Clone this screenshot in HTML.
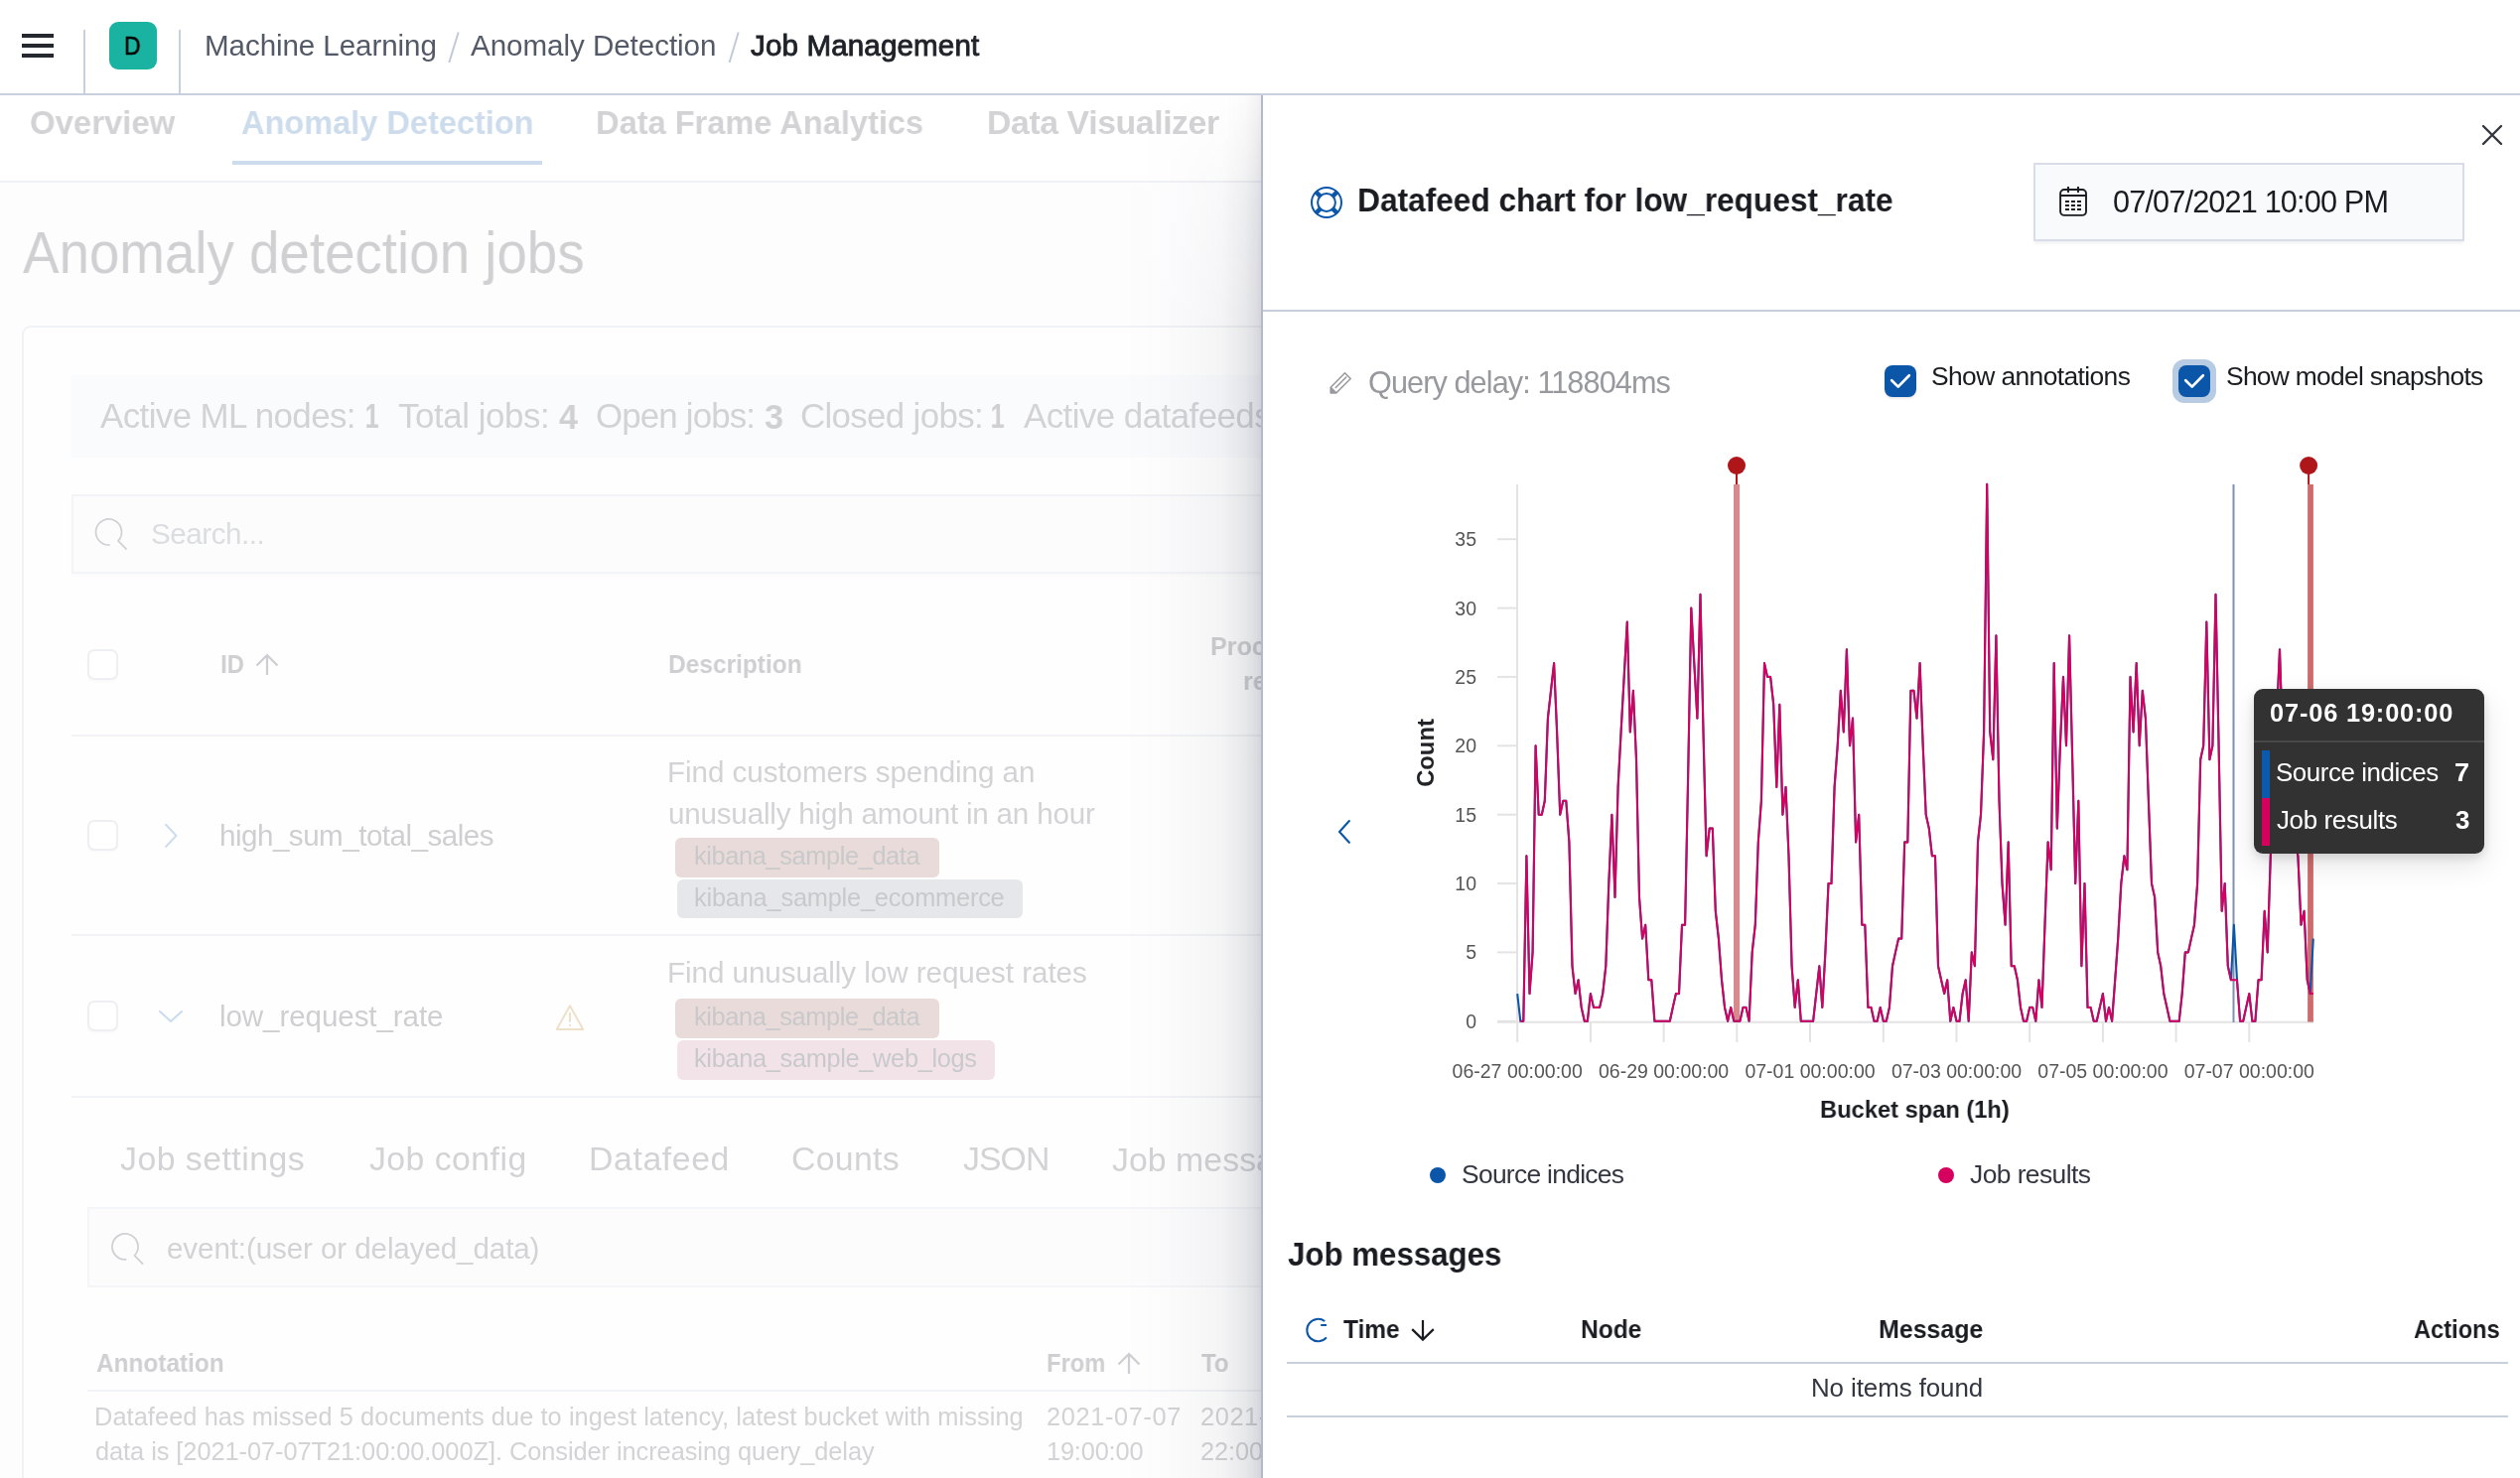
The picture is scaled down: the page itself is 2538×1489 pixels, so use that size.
<!DOCTYPE html>
<html><head><meta charset="utf-8"><title>Job Management</title>
<style>
html,body{margin:0;padding:0}
body{width:2538px;height:1489px;overflow:hidden;position:relative;background:#fff;font-family:"Liberation Sans",sans-serif}
.a{position:absolute;box-sizing:border-box}
.t{position:absolute;white-space:nowrap;z-index:2;will-change:transform}
.tf{z-index:8}
svg.full{position:absolute;left:0;top:0;width:2538px;height:1489px}
</style></head><body>
<!-- ===== left page (faded behind flyout) ===== -->
<div class="a" style="left:0;top:96px;width:1270px;height:1393px;background:#fdfdfe;z-index:0"></div>
<div class="a" style="left:0;top:96px;width:1270px;height:86px;background:#fff;z-index:0"></div>
<div class="a" style="left:0;top:182px;width:1270px;height:2px;background:#f0f1f5;z-index:0"></div>
<div class="a" style="left:234px;top:162px;width:312px;height:4px;background:#cddcec;z-index:1"></div>
<!-- panel -->
<div class="a" style="left:22px;top:328px;width:1400px;height:1300px;background:#fefefe;border:2px solid #f0f2f6;border-radius:9px;z-index:0"></div>
<!-- stats bar -->
<div class="a" style="left:72px;top:378px;width:1300px;height:83px;background:#fafbfd;z-index:1"></div>
<!-- search -->
<div class="a" style="left:72px;top:498px;width:1300px;height:80px;background:#fcfcfd;border:2px solid #f3f4f7;box-shadow:0 2px 3px rgba(0,0,0,0.015);z-index:1"></div>
<!-- table header checkbox -->
<div class="a" style="left:88px;top:654px;width:31px;height:31px;background:#fff;border:2px solid #eeeff2;border-radius:7px;box-shadow:0 2px 2px rgba(0,0,0,0.02);z-index:1"></div>
<div class="a" style="left:72px;top:740px;width:1300px;height:2px;background:#f2f3f6;z-index:1"></div>
<!-- row1 -->
<div class="a" style="left:88px;top:826px;width:31px;height:31px;background:#fff;border:2px solid #eeeff2;border-radius:7px;box-shadow:0 2px 2px rgba(0,0,0,0.02);z-index:1"></div>
<div class="a" style="left:680px;top:844px;width:266px;height:40px;background:#e8dbd9;border-radius:6px;z-index:1"></div>
<div class="a" style="left:682px;top:886px;width:348px;height:39px;background:#e6e7eb;border-radius:6px;z-index:1"></div>
<div class="a" style="left:72px;top:941px;width:1300px;height:2px;background:#f2f3f6;z-index:1"></div>
<!-- row2 -->
<div class="a" style="left:88px;top:1008px;width:31px;height:31px;background:#fff;border:2px solid #eeeff2;border-radius:7px;box-shadow:0 2px 2px rgba(0,0,0,0.02);z-index:1"></div>
<div class="a" style="left:680px;top:1006px;width:266px;height:40px;background:#e8dbd9;border-radius:6px;z-index:1"></div>
<div class="a" style="left:682px;top:1048px;width:320px;height:40px;background:#f2e3e9;border-radius:6px;z-index:1"></div>
<div class="a" style="left:72px;top:1104px;width:1300px;height:2px;background:#f2f3f6;z-index:1"></div>
<!-- search 2 -->
<div class="a" style="left:88px;top:1216px;width:1300px;height:81px;background:#fcfcfd;border:2px solid #f4f5f8;z-index:1"></div>
<div class="a" style="left:88px;top:1400px;width:1300px;height:2px;background:#f2f3f6;z-index:1"></div>
<svg class="full" style="z-index:1" viewBox="0 0 2538 1489">
 <g fill="none" stroke="#cfd0d3" stroke-width="1.7" stroke-linecap="round" stroke-linejoin="round">
  <path d="M110.2 549 A13 13 0 1 1 119 544.9 L127.1 553.2"/>
  <path d="M126.7 1268.9 A13 13 0 1 1 135.5 1264.8 L143.6 1273.1"/>
 </g>
 <g fill="none" stroke="#cdced1" stroke-width="2.2">
  <path d="M269 680 V660 M258.5 670.5 L269 660 L279.5 670.5"/>
  <path d="M1137 1384 V1364 M1126.5 1374.5 L1137 1364 L1147.5 1374.5"/>
 </g>
 <g fill="none" stroke="#c9dbee" stroke-width="2" stroke-linecap="round" stroke-linejoin="round">
  <path d="M167.1 830.9 L177.5 841.9 L167.1 852.9"/>
  <path d="M161 1018.9 L172 1028.9 L183 1018.9"/>
 </g>
 <g fill="none" stroke="#eee0c9" stroke-width="2">
  <path d="M574 1013.2 L587.2 1037 L560.8 1037 Z" stroke-linejoin="round"/>
  <path d="M574 1020.3 V1029.8" /><path d="M574 1032 V1033.8"/>
 </g>
</svg>

<!-- ===== flyout ===== -->
<div class="a" style="left:1130px;top:96px;width:140px;height:1393px;background:linear-gradient(to right,rgba(30,34,60,0) 0%,rgba(30,34,60,0.008) 25%,rgba(30,34,60,0.022) 50%,rgba(30,34,60,0.045) 71%,rgba(30,34,60,0.07) 89%,rgba(30,34,60,0.09) 100%);-webkit-mask-image:linear-gradient(to bottom,rgba(0,0,0,0.05) 0px,rgba(0,0,0,0.5) 90px,#000 240px);z-index:5"></div>
<div class="a" style="left:1230px;top:96px;width:40px;height:1393px;background:linear-gradient(to right,rgba(30,34,60,0) 0%,rgba(30,34,60,0.03) 62%,rgba(30,34,60,0.07) 87%,rgba(30,34,60,0.11) 100%);-webkit-mask-image:linear-gradient(to bottom,rgba(0,0,0,0.6) 0px,#000 110px);z-index:5"></div>
<div class="a" style="left:1270px;top:96px;width:1268px;height:1393px;background:#fff;border-left:2px solid #b3b9c6;z-index:6"></div>
<div class="a" style="left:1272px;top:312px;width:1266px;height:2px;background:#c6cedc;z-index:7"></div>
<!-- date box -->
<div class="a" style="left:2048px;top:164px;width:434px;height:79px;background:#f9fafc;border:2px solid #d8dde8;box-shadow:0 3px 3px -1px rgba(152,162,179,0.18);z-index:7"></div>
<!-- checkboxes -->
<div class="a" style="left:2188px;top:362px;width:44px;height:44px;background:#b7cbe3;border-radius:12px;z-index:7"></div>
<div class="a" style="left:1898px;top:368px;width:32px;height:32px;background:#0b56a9;border-radius:8px;box-shadow:0 2px 2px rgba(0,0,0,0.08);z-index:7"></div>
<div class="a" style="left:2194px;top:368px;width:32px;height:32px;background:#0b56a9;border-radius:8px;z-index:7"></div>
<!-- tooltip -->
<div class="a" style="left:2270px;top:694px;width:232px;height:166px;background:#323232;border-radius:9px;box-shadow:0 4px 10px rgba(0,0,0,0.12),0 12px 30px rgba(0,0,0,0.10);z-index:8"></div>
<div class="a" style="left:2270px;top:746px;width:232px;height:2px;background:#484848;z-index:8"></div>
<div class="a" style="left:2278px;top:756px;width:8px;height:48px;background:#0b5aad;z-index:8"></div>
<div class="a" style="left:2278px;top:804px;width:8px;height:48px;background:#d6005e;z-index:8"></div>
<!-- job messages table borders -->
<div class="a" style="left:1296px;top:1372px;width:1230px;height:2px;background:#c9d0dd;z-index:7"></div>
<div class="a" style="left:1296px;top:1426px;width:1230px;height:2px;background:#c9d0dd;z-index:7"></div>

<svg class="full" style="z-index:7" viewBox="0 0 2538 1489">
<g stroke="#e3e3e3" stroke-width="2" fill="none">
<path d="M1528 488 V1030"/>
<path d="M1508 1029.7 H2330"/>
<path d="M1508 1028.8 H1528"/>
<path d="M1508 959.4 H1528"/>
<path d="M1508 890.1 H1528"/>
<path d="M1508 820.7 H1528"/>
<path d="M1508 751.3 H1528"/>
<path d="M1508 681.9 H1528"/>
<path d="M1508 612.6 H1528"/>
<path d="M1508 543.2 H1528"/>
<path d="M1528.2 1030 V1050"/>
<path d="M1601.9 1030 V1050"/>
<path d="M1675.6 1030 V1050"/>
<path d="M1749.3 1030 V1050"/>
<path d="M1823.0 1030 V1050"/>
<path d="M1896.8 1030 V1050"/>
<path d="M1970.5 1030 V1050"/>
<path d="M2044.2 1030 V1050"/>
<path d="M2117.9 1030 V1050"/>
<path d="M2191.6 1030 V1050"/>
<path d="M2265.3 1030 V1050"/>
</g>
<g font-family="Liberation Sans" font-size="19.5" fill="#565656" text-anchor="end">
<text x="1487" y="1035.8">0</text>
<text x="1487" y="966.4">5</text>
<text x="1487" y="897.1">10</text>
<text x="1487" y="827.7">15</text>
<text x="1487" y="758.3">20</text>
<text x="1487" y="688.9">25</text>
<text x="1487" y="619.6">30</text>
<text x="1487" y="550.2">35</text>
</g>
<g font-family="Liberation Sans" font-size="19.5" fill="#565656" text-anchor="middle">
<text x="1528.2" y="1086.2">06-27 00:00:00</text>
<text x="1675.6" y="1086.2">06-29 00:00:00</text>
<text x="1823.0" y="1086.2">07-01 00:00:00</text>
<text x="1970.5" y="1086.2">07-03 00:00:00</text>
<text x="2117.9" y="1086.2">07-05 00:00:00</text>
<text x="2265.3" y="1086.2">07-07 00:00:00</text>
</g>
<text x="0" y="0" font-family="Liberation Sans" font-size="23.8" font-weight="700" fill="#222326" text-anchor="middle" transform="translate(1444.2 758.5) rotate(-90)">Count</text>
<rect x="1746.0" y="488" width="6.1" height="541.5" fill="#d68a8b"/>
<path d="M1749.0 470 V488" stroke="#ab0d12" stroke-width="1.9"/>
<circle cx="1749.0" cy="469" r="9" fill="#ae161a"/>
<rect x="2324.1" y="488" width="5.8" height="541.5" fill="#cc6c6d"/>
<path d="M2325.1 470 V488" stroke="#ab0d12" stroke-width="1.9"/>
<circle cx="2325.1" cy="469" r="9" fill="#ae161a"/>
<path d="M2249.5 488 V1030" stroke="#8190ad" stroke-width="2"/>
<polyline points="1528.2,1001.1 1531.3,1028.8 1534.3,1028.8 1537.4,862.3 1540.5,1001.1 1543.6,959.4 1546.6,751.3 1549.7,820.7 1552.8,820.7 1555.8,806.8 1558.9,723.6 1562.0,695.8 1565.1,668.1 1568.1,737.4 1571.2,820.7 1574.3,806.8 1577.3,806.8 1580.4,848.4 1583.5,973.3 1586.6,1001.1 1589.6,987.2 1592.7,1014.9 1595.8,1028.8 1598.8,1028.8 1601.9,1001.1 1605.0,1014.9 1608.1,1014.9 1611.1,1014.9 1614.2,1001.1 1617.3,973.3 1620.3,890.1 1623.4,820.7 1626.5,903.9 1629.6,792.9 1632.6,737.4 1635.7,681.9 1638.8,626.5 1641.8,737.4 1644.9,695.8 1648.0,765.2 1651.0,903.9 1654.1,945.6 1657.2,931.7 1660.3,987.2 1663.3,987.2 1666.4,1028.8 1669.5,1028.8 1672.5,1028.8 1675.6,1028.8 1678.7,1028.8 1681.8,1028.8 1684.8,1014.9 1687.9,1001.1 1691.0,1001.1 1694.0,931.7 1697.1,931.7 1700.2,779.1 1703.3,612.6 1706.3,668.1 1709.4,723.6 1712.5,598.7 1715.5,737.4 1718.6,862.3 1721.7,834.6 1724.8,834.6 1727.8,917.8 1730.9,945.6 1734.0,987.2 1737.0,1014.9 1740.1,1028.8 1743.2,1014.9 1746.3,1028.8 1749.3,1028.8 1752.4,1028.8 1755.5,1014.9 1758.5,1014.9 1761.6,1028.8 1764.7,959.4 1767.8,931.7 1770.8,848.4 1773.9,806.8 1777.0,668.1 1780.0,681.9 1783.1,681.9 1786.2,709.7 1789.3,792.9 1792.3,709.7 1795.4,820.7 1798.5,792.9 1801.5,862.3 1804.6,973.3 1807.7,1014.9 1810.8,987.2 1813.8,1028.8 1816.9,1028.8 1820.0,1028.8 1823.0,1028.8 1826.1,1028.8 1829.2,1001.1 1832.3,973.3 1835.3,1014.9 1838.4,959.4 1841.5,890.1 1844.5,890.1 1847.6,792.9 1850.7,751.3 1853.8,695.8 1856.8,737.4 1859.9,654.2 1863.0,751.3 1866.0,723.6 1869.1,848.4 1872.2,820.7 1875.3,931.7 1878.3,931.7 1881.4,1014.9 1884.5,1014.9 1887.5,1028.8 1890.6,1028.8 1893.7,1014.9 1896.8,1028.8 1899.8,1028.8 1902.9,1014.9 1906.0,973.3 1909.0,959.4 1912.1,945.6 1915.2,945.6 1918.2,848.4 1921.3,848.4 1924.4,695.8 1927.5,695.8 1930.5,723.6 1933.6,668.1 1936.7,751.3 1939.7,820.7 1942.8,834.6 1945.9,862.3 1949.0,862.3 1952.0,973.3 1955.1,987.2 1958.2,1001.1 1961.2,987.2 1964.3,1028.8 1967.4,1014.9 1970.5,1028.8 1973.5,1028.8 1976.6,1001.1 1979.7,987.2 1982.7,1028.8 1985.8,959.4 1988.9,973.3 1992.0,848.4 1995.0,820.7 1998.1,737.4 2001.2,487.7 2004.2,737.4 2007.3,765.2 2010.4,640.3 2013.5,806.8 2016.5,890.1 2019.6,931.7 2022.7,848.4 2025.7,973.3 2028.8,973.3 2031.9,987.2 2035.0,1014.9 2038.0,1028.8 2041.1,1028.8 2044.2,1014.9 2047.2,1014.9 2050.3,1028.8 2053.4,987.2 2056.5,1014.9 2059.5,931.7 2062.6,848.4 2065.7,876.2 2068.7,668.1 2071.8,834.6 2074.9,751.3 2078.0,681.9 2081.0,751.3 2084.1,640.3 2087.2,765.2 2090.2,890.1 2093.3,806.8 2096.4,973.3 2099.5,890.1 2102.5,1014.9 2105.6,1014.9 2108.7,1028.8 2111.7,1028.8 2114.8,1014.9 2117.9,1001.1 2121.0,1028.8 2124.0,1014.9 2127.1,1028.8 2130.2,987.2 2133.2,945.6 2136.3,890.1 2139.4,862.3 2142.4,876.2 2145.5,681.9 2148.6,737.4 2151.7,668.1 2154.7,751.3 2157.8,695.8 2160.9,723.6 2163.9,806.8 2167.0,890.1 2170.1,903.9 2173.2,959.4 2176.2,973.3 2179.3,1001.1 2182.4,1014.9 2185.4,1028.8 2188.5,1028.8 2191.6,1028.8 2194.7,1028.8 2197.7,1001.1 2200.8,959.4 2203.9,959.4 2206.9,945.6 2210.0,931.7 2213.1,890.1 2216.2,765.2 2219.2,751.3 2222.3,626.5 2225.4,765.2 2228.4,751.3 2231.5,598.7 2234.6,751.3 2237.7,917.8 2240.7,890.1 2243.8,973.3 2246.9,987.2 2249.9,931.7 2253.0,987.2 2256.1,1028.8 2259.2,1028.8 2262.2,1014.9 2265.3,1001.1 2268.4,1028.8 2271.4,1028.8 2274.5,987.2 2277.6,987.2 2280.7,917.8 2283.7,959.4 2286.8,862.3 2289.9,779.1 2292.9,723.6 2296.0,654.2 2299.1,751.3 2302.2,792.9 2305.2,806.8 2308.3,834.6 2311.4,848.4 2314.4,862.3 2317.5,931.7 2320.6,917.8 2323.7,987.2 2326.7,1001.1 2329.8,945.6" fill="none" stroke="#0b56a9" stroke-width="2.1" stroke-linejoin="round"/>
<polyline points="1531.3,1028.8 1534.3,1028.8 1537.4,862.3 1540.5,1001.1 1543.6,959.4 1546.6,751.3 1549.7,820.7 1552.8,820.7 1555.8,806.8 1558.9,723.6 1562.0,695.8 1565.1,668.1 1568.1,737.4 1571.2,820.7 1574.3,806.8 1577.3,806.8 1580.4,848.4 1583.5,973.3 1586.6,1001.1 1589.6,987.2 1592.7,1014.9 1595.8,1028.8 1598.8,1028.8 1601.9,1001.1 1605.0,1014.9 1608.1,1014.9 1611.1,1014.9 1614.2,1001.1 1617.3,973.3 1620.3,890.1 1623.4,820.7 1626.5,903.9 1629.6,792.9 1632.6,737.4 1635.7,681.9 1638.8,626.5 1641.8,737.4 1644.9,695.8 1648.0,765.2 1651.0,903.9 1654.1,945.6 1657.2,931.7 1660.3,987.2 1663.3,987.2 1666.4,1028.8 1669.5,1028.8 1672.5,1028.8 1675.6,1028.8 1678.7,1028.8 1681.8,1028.8 1684.8,1014.9 1687.9,1001.1 1691.0,1001.1 1694.0,931.7 1697.1,931.7 1700.2,779.1 1703.3,612.6 1706.3,668.1 1709.4,723.6 1712.5,598.7 1715.5,737.4 1718.6,862.3 1721.7,834.6 1724.8,834.6 1727.8,917.8 1730.9,945.6 1734.0,987.2 1737.0,1014.9 1740.1,1028.8 1743.2,1014.9 1746.3,1028.8 1749.3,1028.8 1752.4,1028.8 1755.5,1014.9 1758.5,1014.9 1761.6,1028.8 1764.7,959.4 1767.8,931.7 1770.8,848.4 1773.9,806.8 1777.0,668.1 1780.0,681.9 1783.1,681.9 1786.2,709.7 1789.3,792.9 1792.3,709.7 1795.4,820.7 1798.5,792.9 1801.5,862.3 1804.6,973.3 1807.7,1014.9 1810.8,987.2 1813.8,1028.8 1816.9,1028.8 1820.0,1028.8 1823.0,1028.8 1826.1,1028.8 1829.2,1001.1 1832.3,973.3 1835.3,1014.9 1838.4,959.4 1841.5,890.1 1844.5,890.1 1847.6,792.9 1850.7,751.3 1853.8,695.8 1856.8,737.4 1859.9,654.2 1863.0,751.3 1866.0,723.6 1869.1,848.4 1872.2,820.7 1875.3,931.7 1878.3,931.7 1881.4,1014.9 1884.5,1014.9 1887.5,1028.8 1890.6,1028.8 1893.7,1014.9 1896.8,1028.8 1899.8,1028.8 1902.9,1014.9 1906.0,973.3 1909.0,959.4 1912.1,945.6 1915.2,945.6 1918.2,848.4 1921.3,848.4 1924.4,695.8 1927.5,695.8 1930.5,723.6 1933.6,668.1 1936.7,751.3 1939.7,820.7 1942.8,834.6 1945.9,862.3 1949.0,862.3 1952.0,973.3 1955.1,987.2 1958.2,1001.1 1961.2,987.2 1964.3,1028.8 1967.4,1014.9 1970.5,1028.8 1973.5,1028.8 1976.6,1001.1 1979.7,987.2 1982.7,1028.8 1985.8,959.4 1988.9,973.3 1992.0,848.4 1995.0,820.7 1998.1,737.4 2001.2,487.7 2004.2,737.4 2007.3,765.2 2010.4,640.3 2013.5,806.8 2016.5,890.1 2019.6,931.7 2022.7,848.4 2025.7,973.3 2028.8,973.3 2031.9,987.2 2035.0,1014.9 2038.0,1028.8 2041.1,1028.8 2044.2,1014.9 2047.2,1014.9 2050.3,1028.8 2053.4,987.2 2056.5,1014.9 2059.5,931.7 2062.6,848.4 2065.7,876.2 2068.7,668.1 2071.8,834.6 2074.9,751.3 2078.0,681.9 2081.0,751.3 2084.1,640.3 2087.2,765.2 2090.2,890.1 2093.3,806.8 2096.4,973.3 2099.5,890.1 2102.5,1014.9 2105.6,1014.9 2108.7,1028.8 2111.7,1028.8 2114.8,1014.9 2117.9,1001.1 2121.0,1028.8 2124.0,1014.9 2127.1,1028.8 2130.2,987.2 2133.2,945.6 2136.3,890.1 2139.4,862.3 2142.4,876.2 2145.5,681.9 2148.6,737.4 2151.7,668.1 2154.7,751.3 2157.8,695.8 2160.9,723.6 2163.9,806.8 2167.0,890.1 2170.1,903.9 2173.2,959.4 2176.2,973.3 2179.3,1001.1 2182.4,1014.9 2185.4,1028.8 2188.5,1028.8 2191.6,1028.8 2194.7,1028.8 2197.7,1001.1 2200.8,959.4 2203.9,959.4 2206.9,945.6 2210.0,931.7 2213.1,890.1 2216.2,765.2 2219.2,751.3 2222.3,626.5 2225.4,765.2 2228.4,751.3 2231.5,598.7 2234.6,751.3 2237.7,917.8 2240.7,890.1 2243.8,973.3 2246.9,987.2 2249.9,987.2 2253.0,987.2 2256.1,1028.8 2259.2,1028.8 2262.2,1014.9 2265.3,1001.1 2268.4,1028.8 2271.4,1028.8 2274.5,987.2 2277.6,987.2 2280.7,917.8 2283.7,959.4 2286.8,862.3 2289.9,779.1 2292.9,723.6 2296.0,654.2 2299.1,751.3 2302.2,792.9 2305.2,806.8 2308.3,834.6 2311.4,848.4 2314.4,862.3 2317.5,931.7 2320.6,917.8 2323.7,987.2 2326.7,1001.1 2329.8,1001.1" fill="none" stroke="#d6005e" stroke-width="2.0" stroke-linejoin="round"/>
<path d="M1358.9 827 L1349 838 L1358.9 848.8" fill="none" stroke="#0b56a9" stroke-width="2.1" stroke-linecap="round" stroke-linejoin="round"/>
<circle cx="1448" cy="1184" r="8" fill="#0b56a9"/>
<circle cx="1960" cy="1184" r="8" fill="#d6005e"/>
 <!-- close X -->
 <g fill="none" stroke="#343741" stroke-width="2.4" stroke-linecap="round">
  <path d="M2501 127 L2519 145 M2519 127 L2501 145"/>
 </g>
 <!-- life ring -->
 <g fill="none" stroke="#0b56a9" stroke-width="2">
  <circle cx="1336" cy="204" r="15"/>
  <circle cx="1336" cy="204" r="8.9"/>
  <path stroke-width="4.5" d="M1325 193 L1330.2 198.2 M1347 193 L1341.8 198.2 M1325 215 L1330.2 209.8 M1347 215 L1341.8 209.8"/>
 </g>
 <!-- calendar -->
 <g fill="none" stroke="#1a1c21" stroke-width="1.9">
  <rect x="2075.1" y="191" width="25.9" height="25.9" rx="4"/>
  <path d="M2075 197 H2101 M2083 188 V194 M2093 188 V194"/>
 </g>
 <g fill="#1a1c21">
  <rect x="2080" y="202" width="4" height="2"/><rect x="2086" y="202" width="4" height="2"/><rect x="2092" y="202" width="4" height="2"/>
  <rect x="2080" y="206" width="4" height="2"/><rect x="2086" y="206" width="4" height="2"/><rect x="2092" y="206" width="4" height="2"/>
  <rect x="2080" y="210" width="4" height="2"/><rect x="2086" y="210" width="4" height="2"/><rect x="2092" y="210" width="4" height="2"/>
 </g>
 <!-- pencil -->
 <g fill="none" stroke="#999aa0" stroke-width="1.6" stroke-linejoin="round">
  <path d="M1354.5 375.8 L1360.2 381.5 L1345.7 396 L1340.2 396 L1340.2 390.2 Z"/>
  <path d="M1340.2 390.2 L1345.7 395.8 M1344.8 391 L1356.2 379.5"/>
 </g>
 <path d="M1340.2 390.4 L1340.2 396 L1345.6 396 Z" fill="#999aa0"/>
 <!-- checkmarks -->
 <g fill="none" stroke="#fff" stroke-width="2.7" stroke-linecap="round" stroke-linejoin="round">
  <path d="M1905.2 383.2 L1911.7 389.6 L1922.8 378.2"/>
  <path d="M2201.2 383.2 L2207.7 389.6 L2218.8 378.2"/>
 </g>
 <!-- refresh icon -->
 <g fill="none" stroke="#0b56a9" stroke-width="2">
  <path d="M1335.95 1347.35 A11.2 11.2 0 1 1 1334.24 1331.05"/>
  <path d="M1330.2 1335 H1336"/>
 </g>
 <!-- sort arrow down -->
 <g fill="none" stroke="#1a1c21" stroke-width="2.2">
  <path d="M1433 1330 V1349 M1422.2 1339.1 L1433 1349.6 L1443.8 1339.1"/>
 </g>
</svg>

<!-- ===== header ===== -->
<div class="a" style="left:0;top:0;width:2538px;height:94px;background:#fff;z-index:9"></div>
<div class="a" style="left:0;top:94px;width:2538px;height:2px;background:#c8d0de;z-index:9"></div>
<div class="a" style="left:84px;top:30px;width:2px;height:64px;background:#c8d0de;z-index:9"></div>
<div class="a" style="left:180px;top:30px;width:2px;height:64px;background:#c8d0de;z-index:9"></div>
<div class="a" style="left:22px;top:34px;width:32px;height:4px;background:#25282f;z-index:9"></div>
<div class="a" style="left:22px;top:44px;width:32px;height:4px;background:#25282f;z-index:9"></div>
<div class="a" style="left:22px;top:54px;width:32px;height:4px;background:#25282f;z-index:9"></div>
<div class="a" style="left:110px;top:22px;width:48px;height:48px;background:#1ab3a2;border-radius:9px;z-index:9"></div>
<svg class="full" style="z-index:10" viewBox="0 0 2538 1489">
 <g stroke="#c2c9d7" stroke-width="2"><path d="M461.7 32.5 L452.3 63"/><path d="M743.7 32.5 L734.6 63"/></g>
</svg>
<div class="t" style="left:125.00px;top:33.61px;font-size:25.5px;line-height:25.5px;color:#000000;-webkit-text-stroke:0.6px #000;transform:scaleX(0.9);transform-origin:0 0;z-index:11;">D</div>
<div class="t" style="left:205.60px;top:30.94px;font-size:29.6px;line-height:29.6px;color:#535966;letter-spacing:-0.094px;z-index:11;">Machine Learning</div>
<div class="t" style="left:474.00px;top:30.94px;font-size:29.6px;line-height:29.6px;color:#535966;letter-spacing:-0.058px;z-index:11;">Anomaly Detection</div>
<div class="t" style="left:756.00px;top:30.94px;font-size:29.6px;line-height:29.6px;color:#1f2228;letter-spacing:0.119px;-webkit-text-stroke:0.9px #1f2228;z-index:11;">Job Management</div>
<div class="t" style="left:30.00px;top:106.96px;font-size:33.82px;line-height:33.82px;color:#d3d3d6;font-weight:700;transform:scaleX(0.9729);transform-origin:1.00px 0;">Overview</div>
<div class="t" style="left:243.00px;top:106.96px;font-size:33.82px;line-height:33.82px;color:#cddcec;font-weight:700;transform:scaleX(0.9619);transform-origin:-0.00px 0;">Anomaly Detection</div>
<div class="t" style="left:600.00px;top:106.96px;font-size:33.82px;line-height:33.82px;color:#d3d3d6;font-weight:700;transform:scaleX(0.9631);transform-origin:2.00px 0;">Data Frame Analytics</div>
<div class="t" style="left:994.00px;top:106.96px;font-size:33.82px;line-height:33.82px;color:#d3d3d6;font-weight:700;letter-spacing:-0.413px;">Data Visualizer</div>
<div class="t" style="left:23.40px;top:225.32px;font-size:59.5px;line-height:59.5px;color:#d0d0d2;transform:scaleX(0.9194);transform-origin:-0.00px 0;">Anomaly detection jobs</div>
<div class="t" style="left:100.90px;top:402.47px;font-size:34.88px;line-height:34.88px;color:#d3d3d6;letter-spacing:-0.581px;">Active ML nodes:</div>
<div class="t" style="left:366.70px;top:402.02px;font-size:35.41px;line-height:35.41px;color:#d0d0d3;font-weight:700;transform:scaleX(0.7176);transform-origin:2.00px 0;">1</div>
<div class="t" style="left:400.60px;top:402.47px;font-size:34.88px;line-height:34.88px;color:#d3d3d6;letter-spacing:-0.433px;">Total jobs:</div>
<div class="t" style="left:563.20px;top:401.57px;font-size:35.94px;line-height:35.94px;color:#d0d0d3;font-weight:700;transform:scaleX(0.9450);transform-origin:-0.00px 0;">4</div>
<div class="t" style="left:599.90px;top:402.47px;font-size:34.88px;line-height:34.88px;color:#d3d3d6;letter-spacing:-0.853px;">Open jobs:</div>
<div class="t" style="left:770.20px;top:401.57px;font-size:35.94px;line-height:35.94px;color:#d0d0d3;font-weight:700;transform:scaleX(0.9526);transform-origin:-0.00px 0;">3</div>
<div class="t" style="left:806.20px;top:402.47px;font-size:34.88px;line-height:34.88px;color:#d3d3d6;letter-spacing:-0.666px;">Closed jobs:</div>
<div class="t" style="left:997.00px;top:402.02px;font-size:35.41px;line-height:35.41px;color:#d0d0d3;font-weight:700;transform:scaleX(0.7176);transform-origin:2.00px 0;">1</div>
<div class="t" style="left:1031.00px;top:402.47px;font-size:34.88px;line-height:34.88px;color:#d3d3d6;letter-spacing:-0.55px;">Active datafeeds:</div>
<div class="t" style="left:152.40px;top:522.94px;font-size:29.6px;line-height:29.6px;color:#dcdde0;letter-spacing:-0.451px;">Search...</div>
<div class="t" style="left:222.00px;top:656.13px;font-size:26.42px;line-height:26.42px;color:#cfcfd2;font-weight:700;transform:scaleX(0.9040);transform-origin:1.00px 0;">ID</div>
<div class="t" style="left:672.80px;top:656.03px;font-size:26.42px;line-height:26.42px;color:#cfcfd2;font-weight:700;transform:scaleX(0.9257);transform-origin:1.00px 0;">Description</div>
<div class="t" style="left:1219.00px;top:637.63px;font-size:26.42px;line-height:26.42px;color:#cfcfd2;font-weight:700;transform:scaleX(0.95);transform-origin:0 0;">Proc</div>
<div class="t" style="left:1252.00px;top:673.03px;font-size:26.42px;line-height:26.42px;color:#cfcfd2;font-weight:700;transform:scaleX(0.95);transform-origin:0 0;">re</div>
<div class="t" style="left:221.00px;top:827.44px;font-size:29.6px;line-height:29.6px;color:#cfcfd2;letter-spacing:-0.508px;">high_sum_total_sales</div>
<div class="t" style="left:672.40px;top:763.34px;font-size:29.6px;line-height:29.6px;color:#d3d3d6;letter-spacing:-0.053px;">Find customers spending an</div>
<div class="t" style="left:673.40px;top:805.04px;font-size:29.6px;line-height:29.6px;color:#d3d3d6;letter-spacing:-0.201px;">unusually high amount in an hour</div>
<div class="t" style="left:698.50px;top:850.22px;font-size:25.37px;line-height:25.37px;color:#c9c9cb;letter-spacing:-0.379px;">kibana_sample_data</div>
<div class="t" style="left:699.00px;top:892.12px;font-size:25.37px;line-height:25.37px;color:#c9c9cb;letter-spacing:-0.202px;">kibana_sample_ecommerce</div>
<div class="t" style="left:221.40px;top:1009.24px;font-size:29.6px;line-height:29.6px;color:#cfcfd2;letter-spacing:-0.098px;">low_request_rate</div>
<div class="t" style="left:672.40px;top:965.24px;font-size:29.6px;line-height:29.6px;color:#d3d3d6;letter-spacing:-0.052px;">Find unusually low request rates</div>
<div class="t" style="left:698.50px;top:1012.22px;font-size:25.37px;line-height:25.37px;color:#c9c9cb;letter-spacing:-0.379px;">kibana_sample_data</div>
<div class="t" style="left:699.00px;top:1054.12px;font-size:25.37px;line-height:25.37px;color:#c9c9cb;letter-spacing:-0.326px;">kibana_sample_web_logs</div>
<div class="t" style="left:121.00px;top:1151.36px;font-size:33.82px;line-height:33.82px;color:#d3d3d6;letter-spacing:0.470px;">Job settings</div>
<div class="t" style="left:372.40px;top:1151.36px;font-size:33.82px;line-height:33.82px;color:#d3d3d6;letter-spacing:0.452px;">Job config</div>
<div class="t" style="left:592.80px;top:1151.36px;font-size:33.82px;line-height:33.82px;color:#d3d3d6;letter-spacing:0.596px;">Datafeed</div>
<div class="t" style="left:797.00px;top:1151.36px;font-size:33.82px;line-height:33.82px;color:#d3d3d6;letter-spacing:0.295px;">Counts</div>
<div class="t" style="left:970.00px;top:1151.36px;font-size:33.82px;line-height:33.82px;color:#d3d3d6;letter-spacing:-0.920px;">JSON</div>
<div class="t" style="left:1120.00px;top:1152.36px;font-size:33.82px;line-height:33.82px;color:#d3d3d6;letter-spacing:0.05px;">Job messages</div>
<div class="t" style="left:167.80px;top:1242.94px;font-size:29.6px;line-height:29.6px;color:#d3d3d6;letter-spacing:-0.108px;">event:(user or delayed_data)</div>
<div class="t" style="left:96.70px;top:1360.52px;font-size:25.37px;line-height:25.37px;color:#cfcfd2;font-weight:700;transform:scaleX(0.9621);transform-origin:-0.00px 0;">Annotation</div>
<div class="t" style="left:1054.00px;top:1360.52px;font-size:25.37px;line-height:25.37px;color:#cfcfd2;font-weight:700;transform:scaleX(0.9367);transform-origin:1.00px 0;">From</div>
<div class="t" style="left:1209.50px;top:1360.52px;font-size:25.37px;line-height:25.37px;color:#cfcfd2;font-weight:700;transform:scaleX(0.95);transform-origin:0 0;">To</div>
<div class="t" style="left:94.70px;top:1414.52px;font-size:25.37px;line-height:25.37px;color:#d3d3d6;letter-spacing:0.073px;">Datafeed has missed 5 documents due to ingest latency, latest bucket with missing</div>
<div class="t" style="left:95.70px;top:1450.22px;font-size:25.37px;line-height:25.37px;color:#d3d3d6;letter-spacing:-0.051px;">data is [2021-07-07T21:00:00.000Z]. Consider increasing query_delay</div>
<div class="t" style="left:1054.00px;top:1414.52px;font-size:25.37px;line-height:25.37px;color:#d3d3d6;letter-spacing:0.632px;">2021-07-07</div>
<div class="t" style="left:1054.00px;top:1450.22px;font-size:25.37px;line-height:25.37px;color:#d3d3d6;letter-spacing:-0.173px;">19:00:00</div>
<div class="t" style="left:1208.50px;top:1414.52px;font-size:25.37px;line-height:25.37px;color:#d3d3d6;letter-spacing:0.6px;">2021-07-07</div>
<div class="t" style="left:1208.50px;top:1450.22px;font-size:25.37px;line-height:25.37px;color:#d3d3d6;letter-spacing:-0.1px;">22:00:00</div>
<div class="t tf" style="left:1367.20px;top:184.96px;font-size:33.82px;line-height:33.82px;color:#1a1c21;font-weight:700;transform:scaleX(0.9351);transform-origin:2.00px 0;">Datafeed chart for low_request_rate</div>
<div class="t tf" style="left:2128.00px;top:188.25px;font-size:30.65px;line-height:30.65px;color:#1a1c21;letter-spacing:-0.838px;">07/07/2021 10:00 PM</div>
<div class="t tf" style="left:1378.20px;top:370.05px;font-size:30.65px;line-height:30.65px;color:#98999e;letter-spacing:-0.911px;">Query delay: 118804ms</div>
<div class="t tf" style="left:1944.80px;top:366.03px;font-size:26.42px;line-height:26.42px;color:#1a1c21;letter-spacing:-0.602px;">Show annotations</div>
<div class="t tf" style="left:2242.00px;top:366.03px;font-size:26.42px;line-height:26.42px;color:#1a1c21;letter-spacing:-0.727px;">Show model snapshots</div>
<div class="t tf" style="left:1833.40px;top:1105.97px;font-size:24.84px;line-height:24.84px;color:#1a1c21;font-weight:700;transform:scaleX(0.9533);transform-origin:1.00px 0;">Bucket span (1h)</div>
<div class="t tf" style="left:1471.90px;top:1170.43px;font-size:26.42px;line-height:26.42px;color:#343741;letter-spacing:-0.708px;">Source indices</div>
<div class="t tf" style="left:1984.00px;top:1170.43px;font-size:26.42px;line-height:26.42px;color:#343741;letter-spacing:-0.568px;">Job results</div>
<div class="t tf" style="left:2285.70px;top:706.12px;font-size:25.37px;line-height:25.37px;color:#ffffff;font-weight:700;letter-spacing:0.845px;">07-06 19:00:00</div>
<div class="t tf" style="left:2291.80px;top:765.87px;font-size:25.9px;line-height:25.9px;color:#ffffff;letter-spacing:-0.436px;">Source indices</div>
<div class="t tf" style="left:2472.40px;top:765.87px;font-size:25.9px;line-height:25.9px;color:#ffffff;font-weight:700;transform:scaleX(1.0462);transform-origin:1.00px 0;">7</div>
<div class="t tf" style="left:2292.80px;top:813.67px;font-size:25.9px;line-height:25.9px;color:#ffffff;letter-spacing:-0.345px;">Job results</div>
<div class="t tf" style="left:2473.40px;top:813.67px;font-size:25.9px;line-height:25.9px;color:#ffffff;font-weight:700;transform:scaleX(1.0000);transform-origin:-0.00px 0;">3</div>
<div class="t tf" style="left:1296.70px;top:1247.16px;font-size:33.82px;line-height:33.82px;color:#1a1c21;font-weight:700;transform:scaleX(0.9240);transform-origin:-0.00px 0;">Job messages</div>
<div class="t tf" style="left:1353.30px;top:1325.93px;font-size:26.42px;line-height:26.42px;color:#1a1c21;font-weight:700;transform:scaleX(0.9244);transform-origin:-0.00px 0;">Time</div>
<div class="t tf" style="left:1591.80px;top:1325.93px;font-size:26.42px;line-height:26.42px;color:#1a1c21;font-weight:700;transform:scaleX(0.9280);transform-origin:1.00px 0;">Node</div>
<div class="t tf" style="left:1891.50px;top:1325.93px;font-size:26.42px;line-height:26.42px;color:#1a1c21;font-weight:700;transform:scaleX(0.9438);transform-origin:1.00px 0;">Message</div>
<div class="t tf" style="left:2431.00px;top:1325.93px;font-size:26.42px;line-height:26.42px;color:#1a1c21;font-weight:700;transform:scaleX(0.8945);transform-origin:-0.00px 0;">Actions</div>
<div class="t tf" style="left:1824.00px;top:1386.37px;font-size:25.9px;line-height:25.9px;color:#343741;letter-spacing:-0.079px;">No items found</div>
</body></html>
